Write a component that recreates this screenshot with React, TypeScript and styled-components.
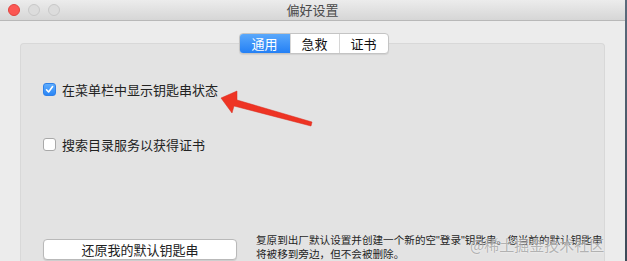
import React from "react";
import styled, {createGlobalStyle} from "styled-components";

const GlobalStyle = createGlobalStyle`
  html, body {
    margin: 0;
    padding: 0;
    background: #4b5a6a;
  }
  body {
    font-family: "Noto Sans CJK SC", "Liberation Sans", sans-serif;
    color: #222;
  }
`;

const Desktop = styled.div`
  width: 627px;
  height: 261px;
  overflow: hidden;
  position: relative;
  background: linear-gradient(#5a6b7c, #3d4a58);
`;

const Window = styled.div`
  width: 625px;
  height: 261px;
  background: #ececec;
  display: flex;
  flex-direction: column;
`;

const TitleBar = styled.div`
  height: 20px;
  flex: none;
  display: flex;
  align-items: center;
  position: relative;
  background: linear-gradient(#ececec, #d6d6d6);
  border-bottom: 1px solid #b8b8b8;
`;

const Lights = styled.div`
  display: flex;
  gap: 8px;
  padding-left: 8px;
`;

const Light = styled.span<{ $color: string; $border: string }>`
  width: 12px;
  height: 12px;
  border-radius: 50%;
  background: ${(p) => p.$color};
  box-sizing: border-box;
  border: 1px solid ${(p) => p.$border};
`;

const Title = styled.div`
  position: absolute;
  left: 0;
  right: 0;
  text-align: center;
  font-size: 13px;
  color: #4a4a4a;
  line-height: 20px;
`;

const Body = styled.div`
  flex: 1;
  padding: 12px 20px 0 20px;
  display: flex;
  flex-direction: column;
`;

const Tabs = styled.div`
  align-self: center;
  display: flex;
  margin-left: 2px;
  height: 19px;
  border: 1px solid #c4c4c4;
  border-radius: 4px;
  background: #fff;
  position: relative;
  z-index: 1;
  box-shadow: 0 1px 1px rgba(0, 0, 0, 0.08);
`;

const Tab = styled.div<{ $active?: boolean; $w: number }>`
  width: ${(p) => p.$w}px;
  display: flex;
  align-items: center;
  justify-content: center;
  font-size: 13px;
  color: ${(p) => (p.$active ? "#fff" : "#111")};
  background: ${(p) => (p.$active ? "linear-gradient(#5aa8fb, #2480f5)" : "transparent")};
  border-radius: ${(p) => (p.$active ? "3px 0 0 3px" : "0")};
  & + & {
    border-left: 1px solid #d6d6d6;
  }
`;

const Panel = styled.div`
  flex: 1;
  margin-top: -11px;
  background: #e3e3e3;
  border: 1px solid #d8d8d8;
  border-bottom: none;
  border-radius: 4px 4px 0 0;
  padding: 38px 0 0 22px;
  display: flex;
  flex-direction: column;
`;

const Row = styled.label<{ $gap?: number }>`
  display: flex;
  align-items: center;
  gap: 6px;
  font-size: 13px;
  line-height: 15px;
  margin-top: ${(p) => p.$gap ?? 0}px;
`;

const Box = styled.span<{ $checked?: boolean }>`
  width: 13px;
  height: 13px;
  flex: none;
  box-sizing: border-box;
  border-radius: 3px;
  display: flex;
  align-items: center;
  justify-content: center;
  background: ${(p) => (p.$checked ? "linear-gradient(#5fadfd, #2a86f6)" : "#fff")};
  border: 1px solid ${(p) => (p.$checked ? "#2f80e8" : "#a9a9a9")};
`;

const Bottom = styled.div`
  margin-top: auto;
  display: flex;
  align-items: flex-start;
  gap: 19px;
  margin-bottom: 1px;
`;

const Button = styled.div`
  width: 194px;
  height: 21px;
  flex: none;
  margin-top: 6px;
  margin-bottom: -3px;
  box-sizing: border-box;
  border: 1px solid #b9b9b9;
  border-radius: 4px;
  background: #fff;
  font-size: 13px;
  display: flex;
  align-items: center;
  justify-content: center;
  box-shadow: 0 1px 1px rgba(0, 0, 0, 0.1);
`;

const Note = styled.div`
  font-size: 10.6px;
  line-height: 13px;
  color: #1e1e1e;
  white-space: nowrap;
`;

const Quote = styled.span`
  font-family: "Liberation Sans", sans-serif;
`;

const Arrow = styled.svg`
  position: absolute;
  left: 0;
  top: 0;
  pointer-events: none;
`;

const Watermark = styled.div`
  position: absolute;
  left: 470px;
  top: 234px;
  font-size: 15px;
  color: rgba(150, 150, 150, 0.7);
  text-shadow: 0 0 2px rgba(255, 255, 255, 0.9);
  white-space: nowrap;
`;

export default function App() {
  return (
    <Desktop>
      <GlobalStyle />
      <Window>
        <TitleBar>
          <Title>偏好设置</Title>
          <Lights>
            <Light $color="#fc5753" $border="#e0443e" />
            <Light $color="#dcdcdc" $border="#c8c8c8" />
            <Light $color="#dcdcdc" $border="#c8c8c8" />
          </Lights>
        </TitleBar>
        <Body>
          <Tabs>
            <Tab $active $w={50}>通用</Tab>
            <Tab $w={48}>急救</Tab>
            <Tab $w={48}>证书</Tab>
          </Tabs>
          <Panel>
            <Row>
              <Box $checked>
                <svg width="9" height="9" viewBox="0 0 9 9">
                  <path d="M1.5 4.8 L3.6 7 L7.6 1.6" fill="none" stroke="#fff" strokeWidth="1.6" strokeLinecap="round" strokeLinejoin="round" />
                </svg>
              </Box>
              在菜单栏中显示钥匙串状态
            </Row>
            <Row $gap={40}>
              <Box />
              搜索目录服务以获得证书
            </Row>
            <Bottom>
              <Button>还原我的默认钥匙串</Button>
              <Note>
                复原到出厂默认设置并创建一个新的空<Quote>"</Quote>登录<Quote>"</Quote>钥匙串。您当前的默认钥匙串
                <br />
                将被移到旁边，但不会被删除。
              </Note>
            </Bottom>
          </Panel>
        </Body>
      </Window>
      <Arrow width="627" height="261">
        <polygon
          points="221,98 237,91 237,100 312,122 311,126 234,106 232,113"
          fill="#ee3424"
          stroke="#d8281a"
          strokeWidth="0.5"
          strokeLinejoin="round"
        />
      </Arrow>
      <Watermark>@稀土掘金技术社区</Watermark>
    </Desktop>
  );
}
